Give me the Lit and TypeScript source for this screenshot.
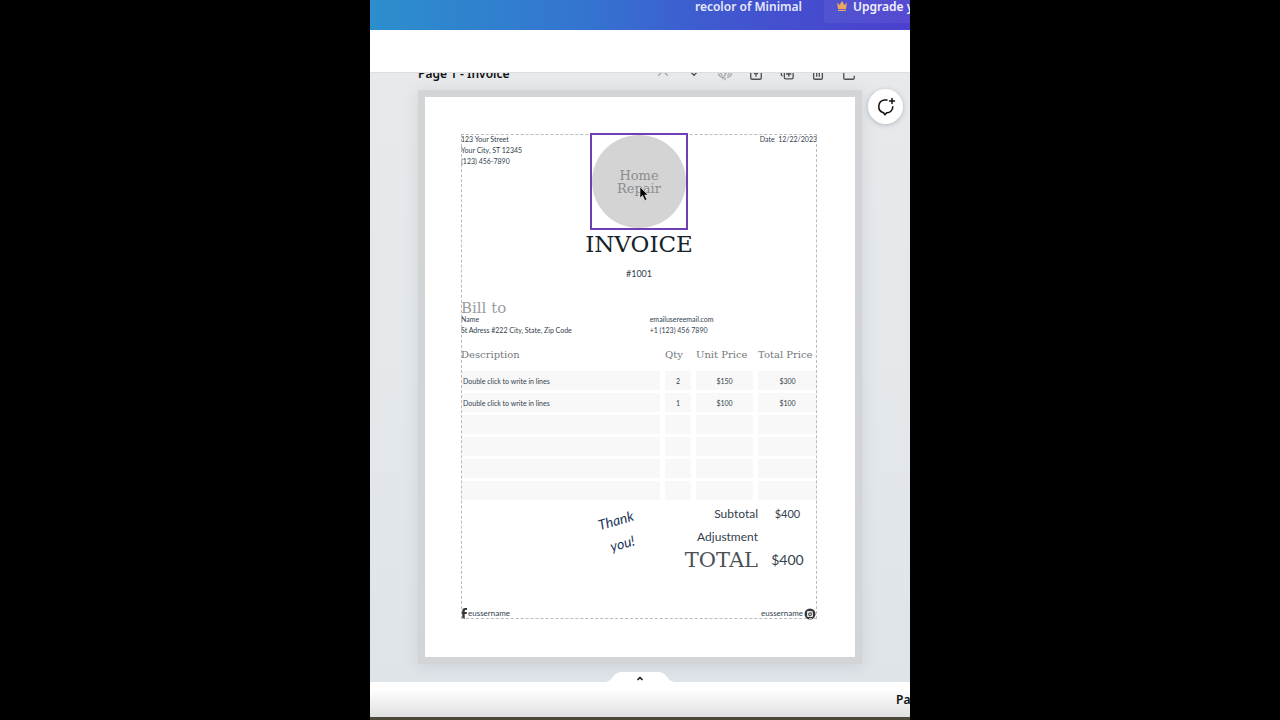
import { LitElement, html, css, svg } from "lit";
import { customElement } from "lit/decorators.js";

interface Line {
  text: string;
  qty: string;
  unit: string;
  total: string;
}

const LINES: Line[] = [
  { text: "Double click to write in lines", qty: "2", unit: "$150", total: "$300" },
  { text: "Double click to write in lines", qty: "1", unit: "$100", total: "$100" },
  ...Array.from({ length: 4 }, () => ({ text: "", qty: "", unit: "", total: "" })),
];

const TOOLS = [
  { label: "Move up", dim: true, shape: svg`<path d="M2.5 10 8 4.500l5.500 5.500"/>` },
  { label: "Move down", dim: false, shape: svg`<path d="m4.500 6 3.500 3.500L11.500 6"/>` },
  { label: "Hide page", dim: true, shape: svg`<path d="M0 7c1 2.500 3 4.500 5.500 5.200M16 7c-1 2.500-3 4.500-5.500 5.200M3 5c0 3 1 4.500 2.500 5M13 5c0 3-1 4.500-2.500 5M5 14 11 4M8 12v3M8 4v4"/>` },
  { label: "Lock page", dim: false, shape: svg`<path d="M2 3v9.500c0 1 .5 1.500 1.500 1.500h9c1 0 1.500-.5 1.500-1.500V3M8 11V6M5.800 8 8 5.800 10.200 8"/>` },
  { label: "Duplicate page", dim: false, shape: svg`<path d="M5 3v9c0 1 .5 1.500 1.500 1.500h7c1 0 1.500-.5 1.500-1.500V3M10 5v6M7 8h6M1.500 3v5.500c0 1 .5 1.500 1.500 1.500"/>` },
  { label: "Delete page", dim: false, shape: svg`<path d="M3 3v9.500C3 13.500 3.500 14 4.500 14h7c1 0 1.500-.5 1.500-1.500V3M6.500 5v6M9.500 5v6M1 3h14"/>` },
  { label: "Add page", dim: false, shape: svg`<path d="M2 3v9.500c0 1 .5 1.500 1.500 1.500h9c1 0 1.500-.5 1.500-1.500V10M12 3v3"/>` },
];

@customElement("app-root")
export class AppRoot extends LitElement {
  static styles = css`
    :host {
      display: block;
      background: #000;
      font-family: "Noto Sans", "Open Sans", sans-serif;
      color: #111;
    }
    * {
      box-sizing: border-box;
    }
    button {
      border: 0;
      padding: 0;
      margin: 0;
      background: none;
      color: inherit;
      font: inherit;
    }
    a {
      color: inherit;
      text-decoration: none;
    }
    h1, h2, p {
      margin: 0;
      font-weight: 400;
    }
    svg {
      display: block;
      fill: none;
      stroke: currentColor;
    }
    .stage {
      height: 100vh;
      aspect-ratio: 3 / 4;
      max-width: 100%;
      margin: 0 auto;
      display: flex;
      flex-direction: column;
      overflow: hidden;
      background: #fff;
    }
    .topbar {
      flex: none;
      height: 30px;
      display: flex;
      justify-content: flex-end;
      align-items: flex-start;
      gap: 22px;
      background: linear-gradient(90deg, #2c8fcd, #3474d0 40%, #4058cf 65%, #4c3fce);
      color: #e6e9fb;
      font-size: 12px;
      font-weight: 600;
      line-height: 13px;
      white-space: nowrap;
      overflow: hidden;
    }
    .upgrade {
      flex: none;
      width: 86px;
      height: 23px;
      padding-left: 12px;
      display: flex;
      gap: 5px;
      overflow: hidden;
      background: rgba(255, 255, 255, 0.06);
      border-radius: 0 0 0 4px;
      color: #f2f2fd;
    }
    .upgrade svg {
      flex: none;
      fill: #eba660;
      stroke: none;
    }
    .toolbar {
      flex: none;
      height: 43px;
      border-bottom: 1px solid #dcdfe1;
    }
    .canvas {
      position: relative;
      flex: 1;
      min-height: 0;
      padding: 0 48px;
      overflow: hidden;
      background: linear-gradient(#e7e9eb, #e4e8eb 50%, #dfe4e9);
    }
    .pagehead {
      height: 18px;
      margin-top: -8px;
      margin-bottom: 7px;
      padding-right: 6px;
      display: flex;
      justify-content: space-between;
      align-items: center;
    }
    .pagename {
      font-size: 12px;
      line-height: 18px;
      font-weight: 600;
    }
    .tools {
      display: flex;
      gap: 17px;
      color: #4c5055;
    }
    .dim {
      color: #a5a9ad;
    }
    .sheet {
      border: 7px solid #d3d4d6;
      padding: 37px 38px 38px 36px;
      background: #fff;
      box-shadow: 0 2px 14px rgba(90, 100, 120, 0.15);
      font-family: Lato, "Open Sans", sans-serif;
      font-size: 7px;
      line-height: 11px;
      color: #33414d;
    }
    .guide {
      display: flex;
      flex-direction: column;
      height: 485px;
      outline: 1px dashed #b9bbbe;
      outline-offset: -1px;
    }
    .wide {
      font-family: "DejaVu Serif", serif;
    }
    .masthead {
      display: grid;
      grid-template-columns: 1fr auto 1fr;
      align-items: start;
      height: 96px;
    }
    .date {
      text-align: right;
    }
    .logo {
      position: relative;
      width: 98px;
      height: 97px;
      margin-top: -1px;
      border: 2px solid #6f40b4;
    }
    .disc {
      height: 100%;
      border-radius: 50%;
      background: #d4d4d4;
      color: #8b8d8f;
      font-size: 13px;
      line-height: 13px;
      text-align: center;
      display: grid;
      place-content: center;
    }
    .cursor {
      position: absolute;
      left: 47px;
      top: 51px;
    }
    .title {
      margin-top: 3px;
      text-align: center;
      font-size: 23px;
      line-height: 22px;
      color: #16222a;
    }
    .number {
      margin-top: 11px;
      text-align: center;
      font-size: 9px;
      line-height: 16px;
    }
    .billto {
      margin-top: 20px;
      font-size: 15px;
      line-height: 12px;
      color: #999da1;
    }
    .contact {
      display: grid;
      grid-template-columns: 53% 1fr;
      height: 36px;
    }
    table {
      width: 100%;
      table-layout: fixed;
      border-collapse: separate;
      border-spacing: 0;
    }
    th {
      height: 21px;
      padding: 0;
      font-size: 10px;
      line-height: 10px;
      font-weight: 400;
      text-align: left;
      vertical-align: top;
      color: #74787c;
      white-space: nowrap;
    }
    td {
      height: 22px;
      padding: 2px 0 0;
      background: #f8f8f8;
      border-right: 5px solid #fff;
      border-bottom: 3px solid #fff;
      text-align: center;
    }
    td:first-child {
      text-align: left;
      padding-left: 2px;
    }
    td:last-child {
      border-right: 0;
    }
    .c2 { width: 31px; }
    .c3 { width: 62px; }
    .c4 { width: 59px; }
    .closing {
      display: grid;
      grid-template-columns: 1fr auto;
      align-items: start;
    }
    .thanks {
      justify-self: end;
      margin: 5px 48px 0 0;
      font-size: 14px;
      line-height: 24px;
      font-style: italic;
      text-align: center;
      transform: rotate(-16deg);
      color: #24365a;
    }
    .totals {
      display: grid;
      grid-template-columns: auto 59px;
      grid-auto-rows: 23px;
      align-items: center;
      margin-top: -1px;
      text-align: right;
      font-size: 12px;
      line-height: 16px;
    }
    .amount {
      text-align: center;
      font-size: 11px;
    }
    .grand {
      font-size: 21px;
      color: #4c5054;
    }
    .sum {
      font-size: 14px;
    }
    .social {
      margin-top: auto;
      height: 11px;
      display: flex;
      justify-content: space-between;
      align-items: center;
      font-size: 8px;
    }
    .social a {
      display: flex;
      align-items: center;
      gap: 1px;
    }
    .social svg {
      stroke: none;
      color: #36393c;
    }
    .insta {
      padding-right: 1px;
    }
    .comment {
      position: absolute;
      right: 7px;
      top: 16px;
      width: 35px;
      height: 35px;
      border-radius: 50%;
      background: #fff;
      box-shadow: 0 1px 5px rgba(60, 70, 90, 0.3);
      display: grid;
      place-items: center;
    }
    .notch {
      position: absolute;
      left: 50%;
      bottom: 0;
      transform: translateX(-50%);
    }
    .bottombar {
      flex: none;
      height: 38px;
      display: flex;
      justify-content: flex-end;
      align-items: center;
      overflow: hidden;
      border-bottom: 3px solid #4a4938;
      background: linear-gradient(#fff 20%, #e0e0e0);
      font-size: 12px;
      font-weight: 600;
    }
    .pages {
      width: 14px;
      white-space: nowrap;
    }
  `;

  render() {
    return html`
      <main class="stage">
        <header class="topbar">
          <span>recolor of Minimal</span>
          <button class="upgrade">
            <svg width="12" height="12" viewBox="0 0 12 12"><path d="M1 2.500 3.500 5 6 1l2.500 4L11 2.500 10 9H2zM2 9.800h8V11H2z"/></svg>
            <span>Upgrade y</span>
          </button>
        </header>
        <div class="toolbar"></div>
        <section class="canvas">
          <div class="pagehead">
            <span class="pagename">Page 1 - Invoice</span>
            <div class="tools">
              ${TOOLS.map(
                (t) => html`<button class=${t.dim ? "dim" : ""} aria-label=${t.label}>
                  <svg width="14" height="14" viewBox="0 0 16 16" stroke-width="1.500">${t.shape}</svg>
                </button>`
              )}
            </div>
          </div>
          <article class="sheet">
            <div class="guide">
              <div class="masthead">
                <p>123 Your Street<br />Your City, ST 12345<br />(123) 456-7890</p>
                <div class="logo">
                  <div class="disc wide">Home<br />Repair</div>
                  <svg class="cursor" width="11" height="16" viewBox="0 0 11 16">
                    <path d="M1 1v11l2.600-2.400L5.800 14.500l2-.9L5.700 9H9z" fill="#000" stroke="#e8e8e8" stroke-width=".6"/>
                  </svg>
                </div>
                <p class="date">Date&nbsp; 12/22/2023</p>
              </div>
              <h1 class="title wide">INVOICE</h1>
              <p class="number">#1001</p>
              <h2 class="billto wide">Bill to</h2>
              <div class="contact">
                <p>Name<br />St Adress #222 City, State, Zip Code</p>
                <p>emailusereemail.com<br />+1 (123) 456 7890</p>
              </div>
              <table>
                <thead>
                  <tr class="wide">
                    <th>Description</th>
                    <th class="c2">Qty</th>
                    <th class="c3">Unit Price</th>
                    <th class="c4">Total Price</th>
                  </tr>
                </thead>
                <tbody>
                  ${LINES.map(
                    (l) => html`<tr><td>${l.text}</td><td>${l.qty}</td><td>${l.unit}</td><td>${l.total}</td></tr>`
                  )}
                </tbody>
              </table>
              <div class="closing">
                <p class="thanks">Thank<br />you!</p>
                <div class="totals">
                  <span>Subtotal</span><span class="amount">$400</span>
                  <span>Adjustment</span><span></span>
                  <span class="grand wide">TOTAL</span><span class="amount sum">$400</span>
                </div>
              </div>
              <div class="social">
                <a href="#facebook">
                  <svg width="6" height="11" viewBox="0 0 6 11"><path fill="currentColor" d="M1.300 11V6H0V4h1.300V2.800C1.300 1 2.300 0 4 0h2v2H4.600c-.6 0-.9.300-.9.900V4H6L5.600 6H3.700v5z"/></svg>
                  <span>eussername</span>
                </a>
                <a class="insta" href="#instagram">
                  <span>eussername</span>
                  <svg width="12" height="12" viewBox="0 0 12 12">
                    <circle cx="6" cy="6" r="5.500" fill="currentColor"/>
                    <rect x="3" y="3" width="6" height="6" rx="1" fill="#e4e4e4"/>
                    <circle cx="6" cy="6.300" r="1.500" fill="#bbb" stroke="#36393c" stroke-width=".9"/>
                    <path d="M7.500 3.600h1v1h-1z" fill="#36393c"/>
                  </svg>
                </a>
              </div>
            </div>
          </article>
          <button class="comment" aria-label="Add comment">
            <svg width="20" height="20" viewBox="0 0 20 20" stroke-width="1.500" stroke-linecap="round" stroke-linejoin="round">
              <path d="M11 3H8.500a6.500 6.500 0 0 0-1 12.700L9 17.800l1.600-2H11a6 6 0 0 0 5.800-6M16 1.500v5M13.500 4h5"/>
            </svg>
          </button>
          <button class="notch" aria-label="Show pages">
            <svg width="72" height="10" viewBox="0 0 72 10">
              <path d="M0 10C10 10 8 0 18 0h36c10 0 8 10 18 10z" fill="#fff" stroke="none"/>
              <path d="m33.500 8 2.500-2.500L38.500 8" stroke-width="1.500"/>
            </svg>
          </button>
        </section>
        <footer class="bottombar"><span class="pages">Pa</span></footer>
      </main>
    `;
  }
}
